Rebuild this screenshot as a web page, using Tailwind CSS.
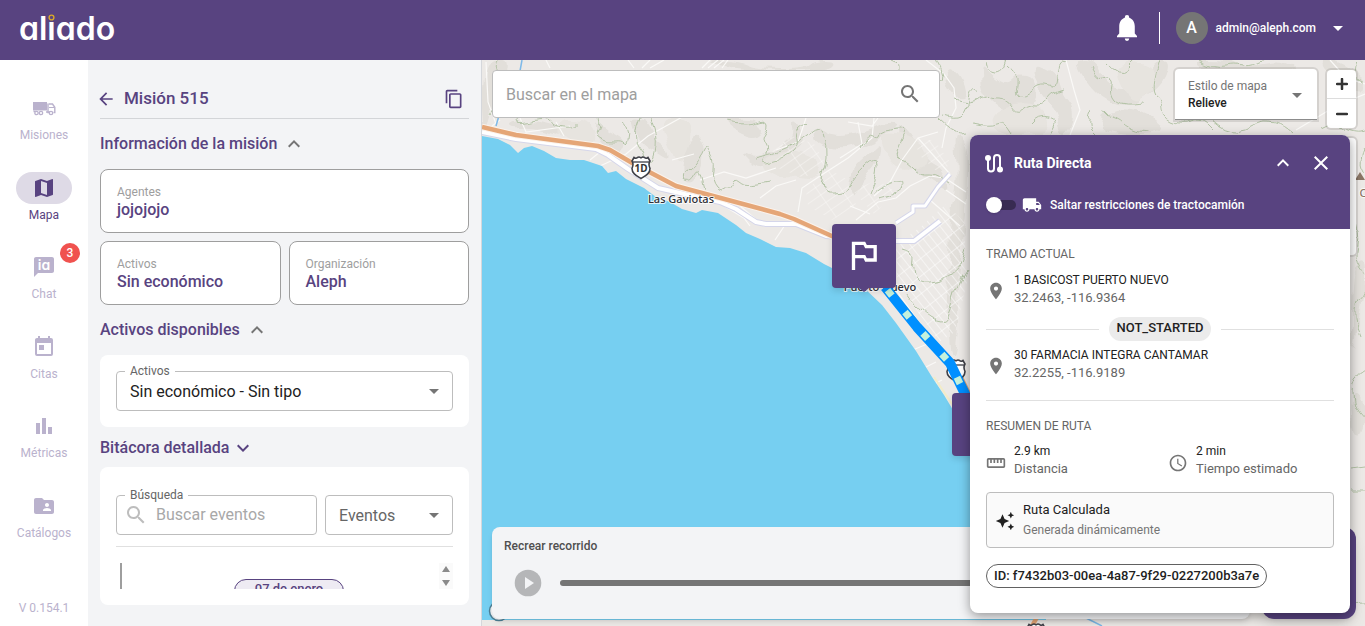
<!DOCTYPE html>
<html lang="es">
<head>
<meta charset="utf-8">
<meta name="viewport" content="width=device-width, initial-scale=1">
<title>aliado - Misión 515</title>
<script src="https://cdn.jsdelivr.net/npm/@tailwindcss/browser@4"></script>
</head>
<body class="h-screen flex flex-col overflow-hidden bg-[#f3f4f6] font-['Roboto',sans-serif] text-[#584380]">

<svg class="hidden" aria-hidden="true">
  <symbol id="up" viewBox="0 0 24 24"><path d="M12 8l-6 6 1.41 1.41L12 10.83l4.59 4.58L18 14z"/></symbol>
  <symbol id="down" viewBox="0 0 24 24"><path d="M16.59 8.59L12 13.17 7.41 8.59 6 10l6 6 6-6z"/></symbol>
  <symbol id="caret" viewBox="0 0 24 24"><path d="M7 10l5 5 5-5z"/></symbol>
  <symbol id="search" viewBox="0 0 24 24"><path d="M15.5 14h-.79l-.28-.27C15.41 12.59 16 11.11 16 9.5 16 5.91 13.09 3 9.5 3S3 5.91 3 9.5 5.91 16 9.5 16c1.61 0 3.09-.59 4.23-1.57l.27.28v.79l5 4.99L20.49 19l-4.99-5zm-6 0C7.01 14 5 11.99 5 9.5S7.01 5 9.5 5 14 7.01 14 9.5 11.99 14 9.5 14z"/></symbol>
  <symbol id="place" viewBox="0 0 24 24"><path d="M12 2C8.13 2 5 5.13 5 9c0 5.25 7 13 7 13s7-7.75 7-13c0-3.87-3.13-7-7-7zm0 9.500c-1.380 0-2.500-1.120-2.500-2.500s1.120-2.500 2.500-2.500 2.500 1.120 2.500 2.500-1.120 2.500-2.500 2.500z"/></symbol>
  <symbol id="shield" viewBox="0 0 20 24"><path d="M3 1.500q2 1.500 3.500 0q1.500-1 3.500.3q2-1.300 3.500-.3q1.500 1.500 3.500 0l2 3.500q-2 3 0 7.500c0 5-4 7-9 10c-5-3-9-5-9-10q2-4.500 0-7.500z" fill="#fff" stroke="#3f4047" stroke-width="1.600"/><path d="M2 6h16" stroke="#3f4047" stroke-width="1.300"/></symbol>
</svg>

<header class="h-[60px] shrink-0 flex items-center justify-between bg-[#584380] pl-[19px] pr-[15px] text-white">
  <a href="#" aria-label="aliado" class="relative font-['Inter',sans-serif] text-[32px] font-semibold leading-[56px] pb-0.5 [font-feature-settings:'cv11']">al<span class="relative">i<span class="absolute left-0 top-[5px] flex h-2 w-full justify-center bg-[#584380]"><svg class="size-[7px]" viewBox="0 0 7 7"><circle cx="3.500" cy="3.500" r="2.400" fill="none" stroke="#d9a928" stroke-width="1.400"/></svg></span></span>ado</a>
  <div class="flex items-center pb-1">
    <button aria-label="Notificaciones" class="mr-[22px]">
      <svg class="h-[26px] w-5" viewBox="3 2 18 21" preserveAspectRatio="none" fill="currentColor"><path d="M21,19V20H3V19L5,17V11C5,7.900 7.030,5.170 10,4.290C10,4.190 10,4.100 10,4A2,2 0 0,1 12,2A2,2 0 0,1 14,4C14,4.100 14,4.190 14,4.290C16.970,5.170 19,7.900 19,11V17L21,19M14,21A2,2 0 0,1 12,23A2,2 0 0,1 10,21"/></svg>
    </button>
    <span class="h-8 w-px bg-white"></span>
    <button class="ml-4 flex items-center text-xs font-medium">
      <span class="mr-2 flex size-8 items-center justify-center rounded-full bg-[#757575] text-base font-medium">A</span>
      admin@aleph.com
      <svg class="ml-[10px] size-6" fill="currentColor"><use href="#caret"/></svg>
    </button>
  </div>
</header>

<div class="flex min-h-0 flex-1">
  <aside class="flex w-[88px] shrink-0 flex-col bg-white pt-8 text-center text-xs text-[#bab2cd]">
    <nav class="flex flex-1 flex-col justify-between">
      <a href="#" class="flex flex-col items-center">
        <span class="flex h-8 w-14 items-center justify-center"><svg class="size-6" viewBox="0 0 24 24" fill="currentColor"><path d="M1 6h14v8.500H1z"/><path d="M16.800 8h3.700l2.300 3.300v5.200h-1.300" fill="none" stroke="currentColor" stroke-width="1.400"/><path d="M16 7.500v9h1.500M1.500 15.500h2M14 16h4" stroke="currentColor" stroke-width="1.400" fill="none"/><path d="M17 11.500h5" stroke="currentColor"/><g fill="#fff" stroke="currentColor" stroke-width="1.300"><circle cx="4.500" cy="17" r="1.700"/><circle cx="9" cy="17" r="1.700"/><circle cx="19" cy="17" r="1.700"/></g></svg></span>
        <span class="leading-[22px]">Misiones</span>
      </a>
      <a href="#" class="flex flex-col items-center text-[#584380]">
        <span class="flex h-8 w-14 items-center justify-center rounded-full bg-[#dedae6]"><svg class="size-6" viewBox="0 0 24 24" fill="currentColor"><path d="M20.500 3l-.16.03L15 5.100 9 3 3.360 4.900c-.21.07-.36.25-.36.48V20.500c0 .28.22.5.5.5l.16-.03L9 18.900l6 2.100 5.640-1.900c.21-.07.36-.25.36-.48V3.500c0-.28-.22-.5-.5-.5zM15 19l-6-2.110V5l6 2.110V19z"/></svg></span>
        <span class="leading-[22px]">Mapa</span>
      </a>
      <a href="#" class="relative flex flex-col items-center">
        <span class="flex h-8 w-14 items-center justify-center"><svg class="size-6" viewBox="0 0 24 24" fill="currentColor"><path d="M20 2H4c-1.100 0-2 .9-2 2v18l4-4h14c1.100 0 2-.9 2-2V4c0-1.100-.9-2-2-2z"/><text x="12" y="15" text-anchor="middle" fill="#fff" font-family="Inter" font-size="14" font-weight="600" class="[font-feature-settings:'cv11']">ia</text></svg></span>
        <span class="absolute right-2 -top-2 flex size-5 items-center justify-center rounded-full bg-[#f0524f] text-xs font-medium text-white">3</span>
        <span class="leading-[22px]">Chat</span>
      </a>
      <a href="#" class="flex flex-col items-center">
        <span class="flex h-8 w-14 items-center justify-center"><svg class="size-6" viewBox="0 0 24 24" fill="currentColor"><path d="M7,10H12V15H7M19,19H5V8H19M19,3H18V1H16V3H8V1H6V3H5C3.890,3 3,3.900 3,5V19A2,2 0 0,0 5,21H19A2,2 0 0,0 21,19V5A2,2 0 0,0 19,3Z"/></svg></span>
        <span class="leading-[22px]">Citas</span>
      </a>
      <a href="#" class="flex flex-col items-center">
        <span class="flex h-8 w-14 items-center justify-center"><svg class="size-6" viewBox="0 0 24 24" fill="currentColor"><path d="M4 9h4v11H4zm12 4h4v7h-4zm-6-9h4v16h-4z"/></svg></span>
        <span class="leading-[22px]">Métricas</span>
      </a>
      <a href="#" class="flex flex-col items-center">
        <span class="flex h-8 w-14 items-center justify-center"><svg class="size-6" viewBox="0 0 24 24" fill="currentColor"><path d="M20 6h-8l-2-2H4c-1.100 0-1.990.9-1.990 2L2 18c0 1.100.9 2 2 2h16c1.100 0 2-.9 2-2V8c0-1.100-.9-2-2-2zm-5 3c1.100 0 2 .9 2 2s-.9 2-2 2-2-.9-2-2 .9-2 2-2zm4 8h-8v-1c0-1.330 2.670-2 4-2s4 .67 4 2v1z"/></svg></span>
        <span class="leading-[22px]">Catálogos</span>
      </a>
    </nav>
    <p class="pt-[53px] pb-[7px] leading-[22px]">V 0.154.1</p>
  </aside>

  <main class="w-[394px] shrink-0 overflow-hidden border-r border-[#d5d7db] px-3 pt-[18px]">
    <div class="flex h-[41px] items-center justify-between border-b border-[#d3d5d8] pt-0.5">
      <h1 class="flex items-center gap-2 text-[17px] font-medium">
        <button aria-label="Volver" class="-ml-1"><svg class="size-5" viewBox="0 0 24 24" fill="currentColor"><path d="M20 11H7.830l5.590-5.590L12 4l-8 8 8 8 1.410-1.410L7.830 13H20v-2z"/></svg></button>
        Misión 515
      </h1>
      <button aria-label="Copiar" class="mr-[5px]"><svg class="size-5" viewBox="0 0 24 24" fill="currentColor"><path d="M16 1H4c-1.100 0-2 .9-2 2v14h2V3h12V1zm3 4H8c-1.100 0-2 .9-2 2v14c0 1.100.9 2 2 2h11c1.100 0 2-.9 2-2V7c0-1.100-.9-2-2-2zm0 16H8V7h11v14z"/></svg></button>
    </div>
    <h2 class="flex h-[50px] items-center gap-[5px] text-base font-medium">Información de la misión <button aria-label="Contraer"><svg class="block size-6 fill-[#757575]"><use href="#up"/></svg></button></h2>
    <dl class="grid grid-cols-2 gap-2">
      <div class="col-span-2 h-16 rounded-lg border border-[#9e9e9e] bg-white px-4 pt-[13px]">
        <dt class="text-xs leading-[18px] text-[#9e9e9e]">Agentes</dt><dd class="text-base font-medium leading-[18px]">jojojojo</dd>
      </div>
      <div class="h-16 rounded-lg border border-[#9e9e9e] bg-white px-4 pt-[13px]">
        <dt class="text-xs leading-[18px] text-[#9e9e9e]">Activos</dt><dd class="text-base font-medium leading-[18px]">Sin económico</dd>
      </div>
      <div class="h-16 rounded-lg border border-[#9e9e9e] bg-white px-4 pt-[13px]">
        <dt class="text-xs leading-[18px] text-[#9e9e9e]">Organización</dt><dd class="text-base font-medium leading-[18px]">Aleph</dd>
      </div>
    </dl>
    <h2 class="flex h-[50px] items-center gap-[5px] text-base font-medium">Activos disponibles <button aria-label="Contraer"><svg class="block size-6 fill-[#757575]"><use href="#up"/></svg></button></h2>
    <section class="rounded-lg bg-white p-4">
      <div class="relative h-10">
        <label for="activos" class="absolute left-[9px] -top-2 bg-white px-[5px] text-xs leading-4 text-[#666]">Activos</label>
        <select id="activos" class="h-full w-full appearance-none rounded border border-[#bdbdbd] pl-[13px] pt-0.5 text-base text-[#212121]"><option>Sin económico - Sin tipo</option></select>
        <svg class="pointer-events-none absolute right-[7px] top-2 size-6 fill-[#757575]"><use href="#caret"/></svg>
      </div>
    </section>
    <h2 class="flex h-10 items-center gap-[1px] pt-px text-base font-medium">Bitácora detallada <button aria-label="Expandir"><svg class="block size-6 fill-[#584380]"><use href="#down"/></svg></button></h2>
    <section class="rounded-lg bg-white px-4 pt-7 pb-4">
      <div class="flex gap-2">
        <div class="relative h-10 flex-1">
          <label for="busqueda" class="absolute left-[9px] -top-2 bg-white px-[5px] text-xs leading-4 text-[#666]">Búsqueda</label>
          <svg class="pointer-events-none absolute left-2 top-2 size-6 fill-[#bdbdbd]"><use href="#search"/></svg>
          <input id="busqueda" type="text" placeholder="Buscar eventos" class="h-full w-full rounded border border-[#bdbdbd] pb-0.5 pl-[39px] text-base placeholder:text-[#a8a8a8]">
        </div>
        <div class="relative h-10 w-32">
          <select aria-label="Eventos" class="h-full w-full appearance-none rounded border border-[#bdbdbd] pl-[13px] pt-0.5 text-base text-[#666]"><option>Eventos</option></select>
          <svg class="pointer-events-none absolute right-[7px] top-2 size-6 fill-[#757575]"><use href="#caret"/></svg>
        </div>
      </div>
      <hr class="mt-[11px] border-[#e0e0e0]">
      <div class="mt-4 flex h-[26px] justify-between overflow-hidden">
        <span class="ml-1 w-0.5 bg-[#9e9e9e]"></span>
        <div class="flex flex-1 justify-center pl-[17px] pt-4"><span class="h-6 rounded-full border border-[#584380] bg-[#eeebf3] px-5 text-[13px] font-medium leading-[18px]">07 de enero</span></div>
        <div class="flex w-[14px] flex-col items-center justify-between bg-[#fafafa] py-[3px]">
          <svg class="h-[6px] w-2" viewBox="0 0 8 6"><path d="M4 0l4 6H0z" fill="#8a8a8a"/></svg>
          <svg class="h-[6px] w-2" viewBox="0 0 8 6"><path d="M4 6l4-6H0z" fill="#8a8a8a"/></svg>
        </div>
      </div>
    </section>
  </main>

  <section aria-label="Mapa" class="relative min-w-0 flex-1 overflow-hidden bg-[#ebe8e4]">
    <svg class="absolute inset-0 size-full" viewBox="482 60 883 566" preserveAspectRatio="xMinYMin slice" fill="none">
      <defs>
        <pattern id="blocks" width="14" height="7" patternUnits="userSpaceOnUse" patternTransform="rotate(52)"><path d="M0 0h14M0 0v7" stroke="#fff"/></pattern>
        <pattern id="blocks2" width="20" height="9" patternUnits="userSpaceOnUse" patternTransform="rotate(-35)"><path d="M0 0h20M0 0v9" stroke="#f9f8f6"/></pattern>
        <filter id="rough" x="-5%" y="-5%" width="110%" height="110%"><feTurbulence type="fractalNoise" baseFrequency="0.05" numOctaves="2" seed="4"/><feDisplacementMap in="SourceGraphic" scale="12" xChannelSelector="R" yChannelSelector="G"/></filter>
      </defs>
      <rect x="482" y="60" width="883" height="566" fill="#ece9e6"/>
      <!-- relief shading -->
      <g id="relief" filter="url(#rough)">
      <g fill="#e2dfda">
        <path d="M482 60l30 0-8 22-12 18-4 24-6 4z"/>
        <path d="M508 122l26-2 22 6 20 2-2 10-18-6-24-6-22 2z"/>
        <path d="M596 120l10 10 14 6 6 10-8 8-12-6-10-14z"/>
        <path d="M632 118l16 4 8 20 10 6 4 14-12-8-14-8-10-14z"/>
        <path d="M686 150l12-16 6 14-4 24-10 12-8-8z"/>
        <path d="M722 120l30-2 14 10-10 12-18-6z"/>
        <path d="M738 150l16 8 22-8 18-14-4-14 12 4 2 20-22 12-20 10-14-6z"/>
        <path d="M816 124l18 14 30-6 22-10 16 2-24 16-28 10-22-2-16-10z"/>
        <path d="M850 170l20-18 10-10-2 20-14 14-6 18-10 4z"/>
        <path d="M896 122l16 12 12 26 18 8 8 24-16-10-18-12-14-16z"/>
        <path d="M954 130l14 10 0 60-8 60-4 90-6 10-2-60 2-80 8-40z"/>
        <path d="M982 60l10 16 16 10 10-12 16 4 4 22-16 14-22-6-18-18z"/>
        <path d="M1030 60l26 10 6 24 14 14-6 26-10 0-4-24-16-16z"/>
        <path d="M1074 60l20 0 12 26 18 6 20-14 12-18 14 0-6 22-22 18-18 8-22-10-16-16z"/>
        <path d="M948 64l14 10 6 22-10 4-14-18z"/>
        <path d="M1098 118l22-10 30 8 18 19-60 0z"/>
        <path d="M1188 60l40 0 20 8 30-6 20 6-14 8-60-2z"/>
        <path d="M1318 60l20 0 27 18 0 18-22-12z"/>
        <path d="M1352 270l13-14 0 40-9 40-4 26z"/>
        <path d="M1350 390l15 10 0 30-11 8z"/>
        <path d="M700 60l40 0 16 8 50 0 8-8 24 0-10 10-80 0z"/>
      </g>
      <g fill="#e7e4df">
        <path d="M560 118l30 4 8 20-16 6-22-10z"/><path d="M660 118l30 0 4 22-14 28-10-20z"/>
        <path d="M760 160l28-10 30 10 6 20-30-4-24 0z"/><path d="M880 130l40 10 10 22-26 10-20-18z"/>
        <path d="M990 110l40-10 20 20-8 14-46 2z"/><path d="M1110 62l40 0 10 24-30 22z"/>
      </g>
      </g>
      <!-- streets -->
      <path d="M772 150l20-14 22 8 12 20-22 14-26-10zM806 190l24-20 22 12 4 24-24 14-24-14zM852 190l26-10 18 12-22 22z" fill="url(#blocks2)"/>
      <path d="M896 244l26-18 24-22 18 18 3 60-12 50-16 10-24-34-18-28z" fill="url(#blocks)"/>
      <path d="M916 140l18 0 16 22-8 14-24-22z" fill="url(#blocks2)"/>
      <g stroke="#faf9f7" stroke-width="1.200">
        <path d="M500 120l-8 6M520 118l6 14 44-6M556 122l8 14M600 166l26-12 22-18 36-20 60-44"/>
        <path d="M486 62l2 40 8 22M546 60l4 8M628 60l6 8M650 60l-8 8M702 68l8-8M708 68l10-8M714 68l10-8M722 68l6-8M650 68l14-8"/>
        <path d="M672 160l22-6M700 180l24-8 22 6 30-10M760 198l16-12 20-6"/>
        <path d="M798 212l4-24 18-12 28-18 24-20 2-20M806 118l-8 24-22 8M840 158l22-14-4-22M848 122l24 4 6-8"/>
        <path d="M775 240l12-18M874 196l16-14 12-22 16-22 20-6M918 138l32 36M942 148l4-20 10-20-2-20-10-14-18-14"/>
        <path d="M1066 60l8 30 6 20-10 25M1296 130l40-24 29-12M1330 60l16 18 19 6"/>
        <path d="M856 220l22-18 18-4 14-12 20-10 14 2M850 206l20 8M946 190l20 14M948 180l18 12M930 200l30 26"/>
        <path d="M740 206l24 20 10-4M724 206l20 12 6 8M590 160l10-8M896 290l50 70M900 330l30 50M908 352l24-10M916 372l20-10M926 388l16-8"/>
      </g>
      <!-- contour lines -->
      <g id="contours" filter="url(#rough)" stroke="#b3c3a6" stroke-width="1">
        <path d="M496 60l-4 12 10 8-4 22-8 14M516 118l-2 6 36-8 4 12 22 2 0-8M598 118l2 8-6 8 14 8 14-2 4 6 4-10-6-14"/>
        <path d="M640 118l-8 20 12 14 0 12 8 2 6-24-8-24M706 145l-8 18-18 14 10 4 8-16 6 24"/>
        <path d="M706 145l10 14-4 22 12 14 10-18 10 10 24-4M726 122l20 4 22-8 2 10-8 10 8 12-10 14 26-6 12-12-4-14 10-8"/>
        <path d="M754 158l20-4 22-10 24-20 8 20-2 24-6 14 4 12 22-2 8-16 24-22 0 20-8 20"/>
        <path d="M860 146l8-14 8 8 10-10 22-2-8 14-6 16 14 2 12 14 14-2 16 10"/>
        <path d="M871 196l14-14 22 0-12 12-16 4M888 60l10 4 0 10M936 60l10 18-14 8M944 116l12 4 10-6 4-30 10 6M938 118l16 16 12-2"/>
        <path d="M986 60l2 12 14 0 4-12M1008 66l12 10-4 16 8 6 14-14 14 2 4 4 2-28 8 2M956 100l14 6 16-14 4 6 18 0 10 16 8-8 16 2 10-14 12-4"/>
        <path d="M1030 124l8-10 20 6-8 14M1090 66l6 14 18 0-4 14 10 12 24-2M1104 114l14 2 12 14 20 2M1160 60l-10 30 14 10 0 16 16 8 20-6 12 12M1092 112l-6 12 10 10M972 124l18 4 14-6 8 12"/>
        <path d="M1106 60l14 16 16-16M1200 60l14 8 22-4 12 4 18-8M1210 120l14 12 22-2 14-10 20 2 14 12M1320 130l14-8 20 8 11-2M1356 60l-6 14 15 10"/>
        <path d="M1365 150l-6 12 6 12M1352 212l8 20-6 28 11 16M1365 288l-8 14-2 18 6 16M1365 370l-12 6 0 30 12 14M1350 466l15-2M1350 490l15 0M1351 596l14 12"/>
        <path d="M900 250l16 4-4 14 8 16 20-2 20-10 8-24M906 292l14 18 24 16 8-16 2-20 12-20"/>
      </g>
      <path d="M522 60l-4 22M500 112l-4 14M1082 616l20 10" stroke="#7db9e8" stroke-width="1.500"/>
      <!-- ocean -->
      <path d="M482 136l16 3 12 6 8 8 6-5 8-2 12 5 12 7 14 2 14 0 18 6 6 7 8-2 10 8 18 9 12 9 14 5 12 7 14 4 6-3 16 3 18 12 10 8 14 6 16 8 14 1 16 5 18 11 20 10 18 12 20 19 14 18 20 28 16 26 12 18 30 50 66 90 6 60 0 25H482z" fill="#76cff1"/>
      <path d="M934 377l20 30" stroke="#f2ecc8" stroke-width="2"/>
      <!-- secondary roads -->
      <g stroke="#d5d6ea" stroke-width="6" stroke-linejoin="round"><path d="M482 132l34 7 80 10 12 6 20 14 30 19 22 5 40 9 16 7 20 13 10 2 30 0 30 12 66 5 22 0 26-20"/><path d="M896 223l17-11 0-6 12 0 13-19 12-13" stroke-width="5"/></g>
      <g stroke="#fff" stroke-width="4" stroke-linejoin="round"><path d="M482 132l34 7 80 10 12 6 20 14 30 19 22 5 40 9 16 7 20 13 10 2 30 0 30 12 66 5 22 0 26-20"/><path d="M896 223l17-11 0-6 12 0 13-19 12-13" stroke-width="3"/></g>
      <!-- highway -->
      <g stroke-linejoin="round"><path d="M482 127l34 8 82 11 12 4 24 14 42 22 104 28 14 5 40 18" stroke="#fbf3ec" stroke-width="6.500"/><path d="M482 127l34 8 82 11 12 4 24 14 42 22 104 28 14 5 40 18 54 50 32 40 36 40 16 33M1040 612l-8 14" stroke="#e5a677" stroke-width="4.500"/></g>
      <use href="#shield" x="631" y="156" width="20" height="24"/>
      <use href="#shield" x="946" y="359" width="20" height="24"/>
      <use href="#shield" x="1026" y="623" width="20" height="24"/>
      <text x="641" y="172" text-anchor="middle" font-size="10" font-weight="700" font-family="Noto Sans" fill="#333">1D</text>
      <g font-family="Noto Sans" font-size="11" font-weight="500" fill="#2f2f35" stroke="#fff" stroke-opacity=".8" stroke-width="2" paint-order="stroke" text-anchor="middle">
        <text x="681" y="203">Las Gaviotas</text><text x="880" y="291">Puerto Nuevo</text><text x="1363" y="197" fill="#8a7565">C</text>
      </g>
      <path d="M1355 180l5-8 5 8z" fill="#8a7565"/>
      <!-- planned route -->
      <g stroke-linejoin="round"><path d="M885 287l32 40 33 36 16 33" stroke="#0090ff" stroke-width="10"/><path d="M885 287l32 40 33 36 16 33" stroke="#c4f1dc" stroke-width="7" stroke-dasharray="7 21" stroke-dashoffset="-4"/></g>
      <g fill="#584380" class="drop-shadow-md"><rect x="832" y="224" width="64" height="64" rx="4"/><path d="M859 288h10l-5 4z"/><rect x="952" y="393" width="64" height="63" rx="4"/></g>
      <svg x="843.500" y="235" width="40" height="40" viewBox="0 0 24 24"><path fill="#fff" d="M14 6l-1-2H5v17h2v-7h5l1 2h7V6h-6zm4 8h-4l-1-2H7V6h5l1 2h5v6z"/></svg>
      <circle cx="499" cy="611" r="9.500" fill="#f3f4f6" stroke="#4c7f95" stroke-width="1.500"/>
    </svg>

    <form class="absolute left-[10px] top-[10px] h-12 w-[448px]">
      <input type="search" aria-label="Buscar en el mapa" placeholder="Buscar en el mapa" class="h-full w-full rounded border border-[#bdbdbd] bg-white pl-[13px] text-base placeholder:text-[#9e9e9e]">
      <button type="button" aria-label="Buscar" class="absolute right-[18px] top-3"><svg class="block size-6 fill-[#757575]"><use href="#search"/></svg></button>
    </form>

    <div class="absolute right-12 top-[9px] h-[51px] w-[142px] rounded-t border-b border-[#8c8c8c] bg-white px-[13px] pt-[9px] shadow-[0_0_0_2px_rgba(0,0,0,0.1)]">
      <label for="estilo" class="block text-xs leading-[17px] text-[#757575]">Estilo de mapa</label>
      <select id="estilo" class="block w-full appearance-none text-xs font-medium leading-[17px] text-[#212121]"><option>Relieve</option></select>
      <svg class="pointer-events-none absolute right-2 top-[14px] size-6 fill-[#757575]"><use href="#caret"/></svg>
    </div>

    <div class="absolute right-[9px] top-[10px] flex w-[29px] flex-col divide-y divide-[#ddd] rounded bg-white shadow-[0_0_0_2px_rgba(0,0,0,0.1)]">
      <button aria-label="Acercar" class="flex h-[29px] items-center justify-center"><svg class="size-3" viewBox="0 0 12 12"><path d="M6 1v10M1 6h10" stroke="#333" stroke-width="2.500" stroke-linecap="round"/></svg></button>
      <button aria-label="Alejar" class="flex h-[29px] items-center justify-center"><svg class="size-3" viewBox="0 0 12 12"><path d="M1 6h10" stroke="#333" stroke-width="2.500" stroke-linecap="round"/></svg></button>
    </div>
    <div class="absolute right-[9px] top-[78px] h-[117px] w-[29px] rounded bg-white shadow-[0_0_0_2px_rgba(0,0,0,0.1)]"></div>

    <div class="absolute bottom-[7px] left-[10px] right-[115px] h-[92px] rounded-lg bg-[#f3f4f6] px-3 pt-[10px] shadow-md">
      <h3 class="text-xs font-medium leading-[18px] text-[#4f4f4f]">Recrear recorrido</h3>
      <div class="mt-[14px] flex items-center gap-[18px] pl-[10px]">
        <button aria-label="Reproducir" class="shrink-0"><svg class="block size-7" viewBox="0 0 28 28"><circle cx="14" cy="14" r="13.300" fill="#b5b6b8"/><path d="M11 8l9 6-9 6z" fill="#f3f4f6"/></svg></button>
        <input type="range" aria-label="Progreso" value="100" class="h-1.5 flex-1 appearance-none rounded-full bg-[#757575]">
      </div>
    </div>
    <button aria-label="Acciones" class="absolute bottom-[7px] right-[9px] h-[92px] w-[94px] rounded-xl bg-[#584380] shadow-lg"></button>

    <article class="absolute right-[15px] top-[75px] w-[380px] overflow-hidden rounded-lg bg-white text-xs text-[#212121] shadow-[0_3px_12px_rgba(0,0,0,0.4)]">
      <header class="bg-[#584380] px-3 pt-[10px] text-white">
        <div class="flex h-9 items-center">
          <svg class="size-6" viewBox="0 0 24 24"><path d="M6 6v11.500a3 3 0 0 0 6 0V7a3 3 0 0 1 6 0v11" fill="none" stroke="currentColor" stroke-width="2"/><circle cx="6" cy="7" r="3" fill="currentColor"/><circle cx="18" cy="18.500" r="3" fill="currentColor"/></svg>
          <h3 class="ml-2 flex-1 text-sm font-bold">Ruta Directa</h3>
          <button aria-label="Contraer" class="mr-[14px]"><svg class="block size-6" fill="currentColor"><use href="#up"/></svg></button>
          <button aria-label="Cerrar" class="mr-[5px]"><svg class="block size-6" viewBox="0 0 24 24" fill="currentColor"><path d="M19 6.410L17.590 5 12 10.590 6.410 5 5 6.410 10.590 12 5 17.590 6.410 19 12 13.410 17.590 19 19 17.590 13.410 12z"/></svg></button>
        </div>
        <label class="flex h-12 items-center pl-1 font-medium">
          <span class="relative mr-[6px] flex h-4 w-[30px] items-center">
            <input type="checkbox" role="switch" class="peer ml-1 h-[10px] w-[26px] appearance-none rounded-full bg-[#382b52]">
            <span class="absolute left-0 size-4 rounded-full bg-white shadow peer-checked:left-[14px]"></span>
          </span>
          <svg class="mr-2 size-5" viewBox="0 0 24 24" fill="currentColor"><path d="M20 8h-3V4H3c-1.100 0-2 .9-2 2v11h2c0 1.660 1.340 3 3 3s3-1.340 3-3h6c0 1.660 1.340 3 3 3s3-1.340 3-3h2v-5l-3-4zM6 18.500c-.83 0-1.500-.67-1.500-1.500s.67-1.500 1.500-1.500 1.500.67 1.500 1.500-.67 1.500-1.500 1.500zm13.500-9l1.960 2.500H17V9.500h2.500zm-1.500 9c-.83 0-1.500-.67-1.500-1.500s.67-1.500 1.500-1.500 1.500.67 1.500 1.500-.67 1.500-1.500 1.500z"/></svg>
          Saltar restricciones de tractocamión
        </label>
      </header>
      <div class="px-4 pt-4 pb-[25px] leading-[18px]">
        <h4 class="text-[#666]">TRAMO ACTUAL</h4>
        <div class="mt-2 flex items-center gap-2">
          <svg class="mt-1 size-5 fill-[#757575]"><use href="#place"/></svg>
          <div><p>1 BASICOST PUERTO NUEVO</p><p class="text-[13px] text-[#666]">32.2463, -116.9364</p></div>
        </div>
        <div class="mt-[10px] flex items-center gap-[10px]">
          <span class="h-px flex-1 bg-[#e0e0e0]"></span>
          <span class="h-6 rounded-full bg-[#ebebeb] px-2 text-[13px] font-medium leading-[22px]">NOT_STARTED</span>
          <span class="h-px flex-1 bg-[#e0e0e0]"></span>
        </div>
        <div class="mt-[5px] flex items-center gap-2">
          <svg class="mt-1 size-5 fill-[#757575]"><use href="#place"/></svg>
          <div><p>30 FARMACIA INTEGRA CANTAMAR</p><p class="text-[13px] text-[#666]">32.2255, -116.9189</p></div>
        </div>
        <hr class="mt-[18px] border-[#e0e0e0]">
        <h4 class="mt-4 text-[#666]">RESUMEN DE RUTA</h4>
        <div class="mt-[7px] grid grid-cols-[182px_1fr]">
          <div class="flex items-center gap-2">
            <svg class="mt-1.5 size-5 fill-[#757575]" viewBox="0 0 24 24"><path d="M21 6H3c-1.100 0-2 .9-2 2v8c0 1.100.9 2 2 2h18c1.100 0 2-.9 2-2V8c0-1.100-.9-2-2-2zm0 10H3V8h2v4h2V8h2v4h2V8h2v4h2V8h2v4h2V8h2v8z"/></svg>
            <div><p>2.9 km</p><p class="text-[13px] text-[#666]">Distancia</p></div>
          </div>
          <div class="flex items-center gap-2">
            <svg class="mt-1.5 size-5 fill-[#757575]" viewBox="0 0 24 24"><path d="M11.990 2C6.470 2 2 6.480 2 12s4.470 10 9.990 10C17.520 22 22 17.520 22 12S17.520 2 11.990 2zM12 20c-4.420 0-8-3.580-8-8s3.580-8 8-8 8 3.580 8 8-3.580 8-8 8zm.5-13H11v6l5.250 3.150.75-1.230-4.500-2.670z"/></svg>
            <div><p>2 min</p><p class="text-[13px] text-[#666]">Tiempo estimado</p></div>
          </div>
        </div>
        <div class="mt-[14px] flex h-14 items-center gap-2 rounded-sm border border-[#bdbdbd] bg-[#fafafa] px-2">
          <svg class="mt-0.5 size-5" viewBox="0 0 24 24" fill="currentColor"><path d="M19 9l1.250-2.750L23 5l-2.750-1.250L19 1l-1.250 2.750L15 5l2.750 1.250L19 9zm-7.500.5L9 4 6.500 9.500 1 12l5.500 2.500L9 20l2.500-5.500L17 12l-5.500-2.500zM19 15l-1.250 2.750L15 19l2.750 1.250L19 23l1.250-2.750L23 19l-2.750-1.250L19 15z"/></svg>
          <div class="leading-5"><p class="text-[13px] leading-[18px]">Ruta Calculada</p><p class="pt-0.5 text-xs leading-[18px] text-[#757575]">Generada dinámicamente</p></div>
        </div>
        <p class="mt-4 flex"><span class="h-6 rounded-full border border-[#616161] px-[7px] text-[13px] font-medium leading-[22px]">ID: f7432b03-00ea-4a87-9f29-0227200b3a7e</span></p>
      </div>
    </article>
  </section>
</div>

<script>
  // Rounds the relief and contour polylines ("Mx y" followed by "l" pairs) into curves through segment midpoints.
  document.querySelectorAll('#relief path, #contours path').forEach(path => {
    path.setAttribute('d', path.getAttribute('d').split('M').filter(Boolean).map(sub => {
      const closed = sub.includes('z');
      const n = sub.match(/-?\d+/g).map(Number);
      const p = [[n[0], n[1]]];
      for (let i = 2; i + 1 < n.length; i += 2) {
        const last = p[p.length - 1];
        p.push([last[0] + n[i], last[1] + n[i + 1]]);
      }
      const mid = (a, b) => [(a[0] + b[0]) / 2, (a[1] + b[1]) / 2];
      if (closed) {
        let d = 'M' + mid(p[p.length - 1], p[0]);
        p.forEach((q, i) => { d += 'Q' + q + ' ' + mid(q, p[(i + 1) % p.length]); });
        return d + 'Z';
      }
      let d = 'M' + p[0];
      for (let i = 1; i < p.length - 1; i++) d += 'Q' + p[i] + ' ' + mid(p[i], p[i + 1]);
      return d + 'L' + p[p.length - 1];
    }).join(''));
  });
</script>
</body>
</html>
